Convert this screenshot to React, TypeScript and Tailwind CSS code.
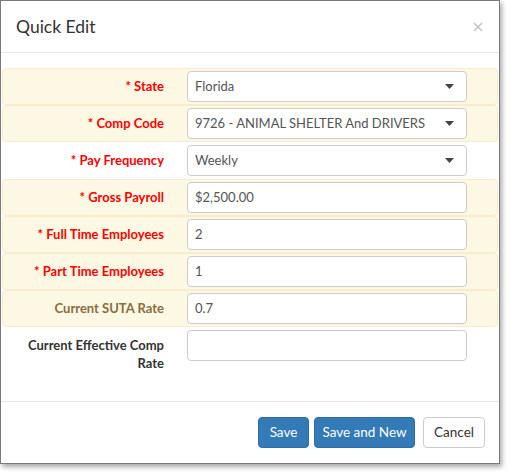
const font = { fontFamily: 'Lato, "Open Sans", sans-serif' };

type Field = {
  label: string;
  value: string;
  required?: boolean;
  select?: boolean;
  warn?: boolean;
  tone?: "red" | "brown" | "dark";
};

const fields: Field[] = [
  { label: "State", value: "Florida", required: true, select: true, warn: true, tone: "red" },
  {
    label: "Comp Code",
    value: "9726 - ANIMAL SHELTER And DRIVERS (PREMIUM)",
    required: true,
    select: true,
    warn: true,
    tone: "red",
  },
  { label: "Pay Frequency", value: "Weekly", required: true, select: true, tone: "red" },
  { label: "Gross Payroll", value: "$2,500.00", required: true, warn: true, tone: "red" },
  { label: "Full Time Employees", value: "2", required: true, warn: true, tone: "red" },
  { label: "Part Time Employees", value: "1", required: true, warn: true, tone: "red" },
  { label: "Current SUTA Rate", value: "0.7", warn: true, tone: "brown" },
];

function Caret() {
  return (
    <svg width="9" height="5" viewBox="0 0 9 5" className="shrink-0 ml-[18px]">
      <path d="M0 0h9L4.5 5z" fill="#444" />
    </svg>
  );
}

function Row({ f }: { f: Field }) {
  const color =
    f.tone === "red" ? "text-[#ff0000]" : f.tone === "brown" ? "text-[#8a6d3b]" : "text-[#333]";
  return (
    <div
      className={`flex items-center py-[2px] border rounded-[4px] ${
        f.warn ? "bg-[#fcf8e3] border-[#faebcc]" : "border-transparent"
      }`}
    >
      <div className={`w-[169px] pr-[8px] text-right text-[13px] font-bold ${color}`}>
        {f.required ? "* " : ""}
        {f.label}
      </div>
      <div className="ml-[15px] w-[280px] h-[31px] bg-white border border-[#ccc] rounded-[4px] flex items-center pl-[7px] pr-[12px] text-[13px] text-[#555]">
        <span className="flex-1 overflow-hidden whitespace-nowrap">{f.value}</span>
        {f.select && <Caret />}
      </div>
    </div>
  );
}

export default function App() {
  return (
    <div className="min-h-screen bg-white" style={font}>
      <div className="w-[500px] h-[464px] bg-white border border-[#7a7a7a] shadow-[2px_3px_5px_rgba(0,0,0,0.35)] flex flex-col">
        <div className="h-[52px] shrink-0 border-b border-[#e5e5e5] flex items-center justify-between pl-[15px] pr-[16px]">
          <h1 className="text-[17.5px] text-[#333] leading-none">Quick Edit</h1>
          <svg width="10" height="10" viewBox="0 0 10 10">
            <path d="M1 1l8 8M9 1l-8 8" stroke="#c4c4c4" strokeWidth="1.6" />
          </svg>
        </div>

        <div className="flex-1 pt-[15px] px-px">
          {fields.map((f) => (
            <Row key={f.label} f={f} />
          ))}
          <div className="flex items-start py-[2px] border border-transparent">
            <div className="w-[169px] pr-[8px] pt-[6px] text-right text-[13px] font-bold text-[#333] leading-[18px]">
              Current Effective Comp Rate
            </div>
            <div className="ml-[15px] w-[280px] h-[31px] bg-white border border-[#ccc] rounded-[4px]" />
          </div>
        </div>

        <div className="h-[62px] shrink-0 border-t border-[#e5e5e5] flex items-center justify-end pr-[14px] text-[13.5px]">
          <button className="w-[51px] h-[31px] rounded-[4px] bg-[#337ab7] border border-[#2e6da4] text-white">
            Save
          </button>
          <button className="ml-[5px] w-[101px] h-[31px] rounded-[4px] bg-[#337ab7] border border-[#2e6da4] text-white">
            Save and New
          </button>
          <button className="ml-[8px] w-[62px] h-[31px] rounded-[4px] bg-white border border-[#ccc] text-[#333]">
            Cancel
          </button>
        </div>
      </div>
    </div>
  );
}
